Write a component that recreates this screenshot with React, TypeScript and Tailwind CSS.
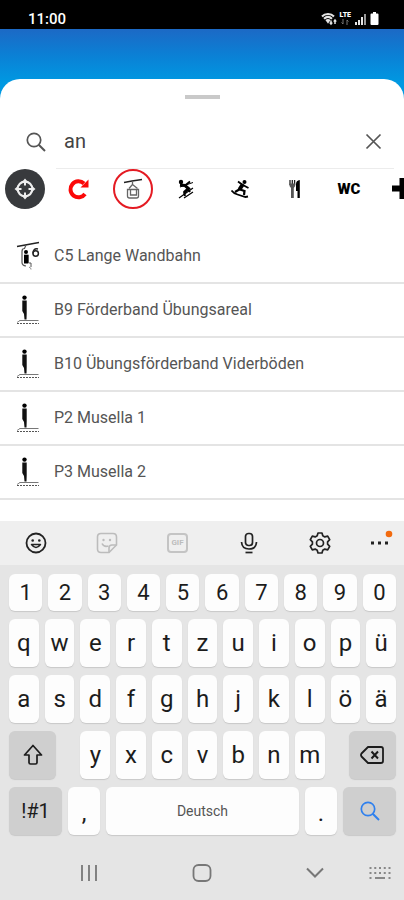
import React, { useState } from 'react';

type LiftKind = 'chair' | 'belt';

interface Lift {
  name: string;
  kind: LiftKind;
}

const LIFTS: Lift[] = [
  { name: 'C5 Lange Wandbahn', kind: 'chair' },
  { name: 'B9 Förderband Übungsareal', kind: 'belt' },
  { name: 'B10 Übungsförderband Viderböden', kind: 'belt' },
  { name: 'P2 Musella 1', kind: 'belt' },
  { name: 'P3 Musella 2', kind: 'belt' },
];

const DIGITS = '1234567890'.split('');
const TOP_ROW = 'qwertzuiopü'.split('');
const HOME_ROW = 'asdfghjklöä'.split('');
const BOTTOM_ROW = 'yxcvbnm'.split('');

const StatusBar: React.FC = () => (
  <div className="flex h-[29px] items-center justify-between bg-black pr-[25px] pl-7 pt-2 text-white">
    <span className="text-[15px] leading-5 font-medium">11:00</span>
    <div className="flex items-center gap-[3px]">
      <svg width="16" height="14" viewBox="0 0 16 14" fill="none" stroke="#e5e5e5">
        <path d="M1 4.5C4 1.2 10 1.2 13 4.5" strokeWidth="2" />
        <path d="M3 6.8C5.4 4.5 8.6 4.5 11 6.8" strokeWidth="2" />
        <path d="M4.4 8 7 11.8 9.6 8C8 6.8 6 6.8 4.4 8Z" fill="#e5e5e5" stroke="none" />
        <path d="M10 8.5v3M8.8 10.5 10 12l1.2-1.5M14 12V8.5M12.8 9.6 14 8l1.2 1.6" strokeWidth="1.5" />
      </svg>
      <div className="flex flex-col items-center">
        <span className="text-[7px] leading-[7px] font-black">LTE</span>
        <svg width="8" height="6" viewBox="0 0 8 6" fill="none" stroke="#777">
          <path d="M2 0v5M0.5 3.5 2 5M6 6V1M6 1l1.5 1.5" />
        </svg>
      </div>
      <svg width="13" height="12" viewBox="0 0 13 12" fill="#e5e5e5">
        <path d="M1 9h2v3H1zM4 7h2v5H4zM7 4h2v8H7z" />
        <path d="M10 1h2v11h-2z" fill="#999" />
      </svg>
      <svg width="9" height="13" viewBox="0 0 9 13" fill="white">
        <path d="M3 0h3v1.500h1.500q1 0 1 1V12q0 1-1 1h-6q-1 0-1-1V2.500q0-1 1-1H3z" />
      </svg>
    </div>
  </div>
);

const SearchGlyph: React.FC<{ className: string }> = ({ className }) => (
  <svg className={className} viewBox="0 0 20 20" fill="none" stroke="currentColor">
    <circle cx="8" cy="8" r="6.700" strokeWidth="1.700" />
    <path d="m12.700 12.700 6.300 6.300" strokeWidth="2" />
  </svg>
);

const LiftIcon: React.FC<{ kind: LiftKind }> = ({ kind }) =>
  kind === 'chair' ? (
    <svg width="24" height="30" viewBox="0 0 24 30" fill="none" stroke="#222">
      <path d="M1 5.500 23 1.500" strokeWidth="1.300" />
      <path d="M10 4 8.500 7.500q-2.500 0-2.500 3v11q0 3 4 3.500" stroke="#555" strokeWidth="1.200" />
      <circle cx="10" cy="11" r="2" fill="#000" stroke="none" />
      <path d="M8 14h4.500v8H15v4" stroke="#555" />
      <path d="M8 14h4v8.500H8z" fill="#000" stroke="none" />
      <path d="m13 26 2 1.500v1" stroke="#888" />
      <path d="M22 8C18.500 7 17 9.500 17 12.500" strokeWidth="1.500" />
      <circle cx="19.700" cy="12.500" r="2.700" strokeWidth="1.500" />
    </svg>
  ) : (
    <svg width="24" height="30" viewBox="0 0 24 30" fill="none">
      <circle cx="8.500" cy="2.600" r="2.200" fill="#000" />
      <path d="M6.300 5.500h4.400v13l-.2 6H8.500L8 19l-1.700-3z" fill="#111" />
      <path d="M3.500 25.500h19" stroke="#777" />
      <path d="M1 28.500h22" stroke="#555" strokeDasharray="2 1" />
      <path d="M1 27.500 4 25.500" stroke="#888" />
    </svg>
  );

const GondolaIcon = () => (
  <svg width="20" height="22" viewBox="0 0 20 22" fill="none" stroke="#666" strokeWidth="1.300">
    <path d="M1 4.500 9 3l10-1.500" stroke="#222" />
    <path d="M9.500 3v3.500L6 10.500M9.500 6.500l5 4" />
    <path d="M4.500 11.500h11v6.500q0 2-2 2h-7q-2 0-2-2z" />
    <path d="M7.500 11.500V17h6v-5.500" />
  </svg>
);

const SkierIcon = () => (
  <svg width="20" height="22" viewBox="0 0 20 22" fill="none" stroke="#000">
    <circle cx="4" cy="4" r="2.200" fill="#000" stroke="none" />
    <path d="m3 7 5 .500 3.500 3-4.500 4" strokeWidth="3" />
    <path d="m8 7.500 5-4" strokeWidth="1.800" />
    <path d="m3 9 13-4.500" strokeWidth="1" />
    <path d="m7 14 1 4M11 11l2 3" strokeWidth="2" />
    <path d="m2 20 14-10M7 20l9-6" strokeWidth="1.200" />
  </svg>
);

const SnowboarderIcon = () => (
  <svg width="20" height="22" viewBox="0 0 20 22" fill="none" stroke="#000">
    <circle cx="13.500" cy="4" r="2" fill="#000" stroke="none" />
    <path d="M7 3.500 11 6.500l6.500 3.500" strokeWidth="1.800" />
    <path d="m12 6-3.500 5.500" strokeWidth="4" />
    <path d="m9 11-5 3M9 11.500l4.500 1.500-.500 4" strokeWidth="2.200" />
    <path d="M.5 12.500q2 3 6 4l8 2.500 2.500-.5" strokeWidth="1.800" />
  </svg>
);

const ForkKnifeIcon = () => (
  <svg width="12" height="20" viewBox="0 0 12 20" fill="none">
    <path d="M1 1v5M3.300 1v5M5.600 1v5" stroke="#222" strokeWidth="1.300" />
    <path d="M.5 4.500h5.700V7L4.800 9v10H2V9L.5 7z" fill="#555" />
    <path d="M10.800 1v18H8.500v-7H7V5q0-3.500 3.800-4z" fill="#000" />
  </svg>
);

const FILTERS = [
  {
    label: 'Standort',
    shape: 'bg-[#383a3d]',
    icon: (
      <svg width="24" height="24" viewBox="0 0 24 24" fill="none">
        <circle cx="12" cy="12" r="7.300" stroke="#eee" strokeWidth="2.200" />
        <path d="m12 1.500 2.500 3h-5zM12 22.500l2.500-3h-5zM1.500 12l3-2.500v5zM22.500 12l-3-2.500v5z" fill="#eee" />
        <path d="M12 5v3.500M12 15.500V19M5 12h3.500M15.500 12H19" stroke="#eee" strokeWidth="2" />
      </svg>
    ),
  },
  {
    label: 'Zurücksetzen',
    shape: '',
    icon: (
      <svg width="22" height="22" viewBox="0 0 22 22" fill="none" stroke="#fb0808">
        <path d="M16 5.500A8 8 0 1 0 17 16" strokeWidth="4" />
        <path d="M20.500 1.500V9.500H12.500z" fill="#fb0808" stroke="none" />
      </svg>
    ),
  },
  { label: 'Lifte', shape: 'border-2 border-[#e41b23]', icon: <GondolaIcon /> },
  { label: 'Pisten', shape: '', icon: <SkierIcon /> },
  { label: 'Snowboard', shape: '', icon: <SnowboarderIcon /> },
  { label: 'Restaurants', shape: '', icon: <ForkKnifeIcon /> },
  { label: 'WC', shape: '', icon: <span className="text-[15px] font-black">WC</span> },
  {
    label: 'Erste Hilfe',
    shape: '',
    icon: (
      <svg width="22" height="22" viewBox="0 0 22 22">
        <path d="M7.500 0h7v7.500H22v6h-7.500V21h-7v-7.500H0v-6h7.500z" />
      </svg>
    ),
  },
];

const Key: React.FC<{ label: string; className?: string; children?: React.ReactNode }> = ({
  label,
  className = 'h-12 bg-[#fdfdfd] text-2xl',
  children,
}) => (
  <button
    type="button"
    aria-label={label}
    className={`flex items-center justify-center rounded-md shadow-[0_1px_1px_#c8c8c8] ${className}`}
  >
    {children ?? label}
  </button>
);

const KeyboardToolbar: React.FC = () => (
  <div className="grid h-11 grid-cols-[repeat(5,71fr)_49fr] place-items-center bg-[#efefef] text-[#222]">
    <button type="button" aria-label="Emoji">
      <svg width="22" height="22" viewBox="0 0 22 22" fill="none" stroke="currentColor" strokeWidth="1.800">
        <circle cx="11" cy="11" r="9.500" />
        <path d="M6.500 12.500q4.500 6 9 0z" strokeWidth="1.500" strokeLinejoin="round" />
        <circle cx="7.700" cy="8.500" r="1.300" fill="currentColor" stroke="none" />
        <circle cx="14.300" cy="8.500" r="1.300" fill="currentColor" stroke="none" />
      </svg>
    </button>
    <button type="button" aria-label="Sticker" className="text-[#bcbcbc]">
      <svg width="22" height="22" viewBox="0 0 22 22" fill="none" stroke="currentColor" strokeWidth="1.600">
        <path d="M5 1.500h12q3.500 0 3.500 3.500v8L13 20.500H5Q1.500 20.500 1.500 17V5Q1.500 1.500 5 1.500z" />
        <path d="M20.500 13H16q-3 0-3 3v4.500" />
        <path d="M6 11.500q2 4 6.500 2.500" />
        <circle cx="7.500" cy="8" r="1.200" fill="currentColor" stroke="none" />
        <circle cx="14" cy="8" r="1.200" fill="currentColor" stroke="none" />
      </svg>
    </button>
    <button
      type="button"
      className="flex h-5 w-[21px] items-center justify-center rounded-[4px] border-2 border-[#c4c4c4] text-[8px] font-bold text-[#bcbcbc]"
    >
      GIF
    </button>
    <button type="button" aria-label="Spracheingabe">
      <svg width="20" height="22" viewBox="0 0 20 22" fill="none" stroke="currentColor" strokeWidth="1.700">
        <rect x="6.500" y="1.500" width="7" height="12" rx="3" />
        <path d="M2.500 10q.5 7 7.500 7t7.500-7" />
        <path d="M6.500 20.500h7" />
      </svg>
    </button>
    <button type="button" aria-label="Einstellungen">
      <svg width="24" height="24" viewBox="0 0 24 24" fill="none" stroke="currentColor" strokeWidth="1.700">
        <path
          d="M10 2h4l.8 2.800 2 1.100 2.900-.7 2 3.500-2.100 2.100v2.400l2.100 2.100-2 3.500-2.900-.7-2 1.100L14 22h-4l-.8-2.800-2-1.100-2.900.7-2-3.500 2.100-2.100v-2.400L2.300 8.700l2-3.500 2.900.7 2-1.100z"
          strokeLinejoin="round"
        />
        <circle cx="12" cy="12" r="3.500" />
      </svg>
    </button>
    <button type="button" aria-label="Mehr">
      <svg width="26" height="26" viewBox="0 0 26 26" fill="currentColor">
        <path d="M4 11.500h3v3H4zM11 11.500h3v3h-3zM18 11.500h3v3h-3z" />
        <circle cx="22" cy="4" r="3.300" fill="#f26a0e" />
      </svg>
    </button>
  </div>
);

const NavBar: React.FC = () => (
  <nav className="mt-2 grid h-[57px] grid-cols-[113fr_113fr_113fr_32fr] place-items-center pt-[2px] pl-8 text-[#777]">
    <button type="button" aria-label="Letzte Apps">
      <svg width="18" height="18" viewBox="0 0 18 18" fill="none" stroke="currentColor" strokeWidth="1.800">
        <path d="M2 1v16M9 1v16M16 1v16" />
      </svg>
    </button>
    <button type="button" aria-label="Startseite">
      <svg width="20" height="18" viewBox="0 0 20 18" fill="none" stroke="currentColor" strokeWidth="1.800">
        <rect x="1.500" y="1" width="17" height="16" rx="5" />
      </svg>
    </button>
    <button type="button" aria-label="Tastatur ausblenden">
      <svg width="18" height="12" viewBox="0 0 18 12" fill="none" stroke="currentColor" strokeWidth="2">
        <path d="m1 1.500 8 8 8-8" />
      </svg>
    </button>
    <button type="button" aria-label="Tastatur wechseln" className="-ml-4">
      <svg width="24" height="14" viewBox="0 0 24 14" fill="none" stroke="#888" strokeWidth="1.800">
        <path d="M1.500 2h22M1.500 7h22" strokeDasharray="2 2.750" />
        <path d="M1.500 12h2M7 12h10M20.500 12h2" />
      </svg>
    </button>
  </nav>
);

const Keyboard: React.FC = () => (
  <div className="bg-[#e5e5e5] text-[#1c1c1c]">
    <KeyboardToolbar />
    <div className="flex flex-col gap-2 pt-[9px] pr-2 pl-[9px]">
      <div className="grid grid-cols-10 gap-[6px]">
        {DIGITS.map((d) => (
          <Key key={d} label={d} className="h-[37px] bg-[#fdfdfd] text-[22px]" />
        ))}
      </div>
      <div className="grid grid-cols-11 gap-[6px]">
        {TOP_ROW.map((c) => (
          <Key key={c} label={c} />
        ))}
      </div>
      <div className="grid grid-cols-11 gap-[6px]">
        {HOME_ROW.map((c) => (
          <Key key={c} label={c} />
        ))}
      </div>
      <div className="grid grid-cols-11 gap-[6px]">
        <Key label="Umschalt" className="col-span-2 h-12 w-[47px] bg-[#cfcfcf]">
          <svg width="20" height="22" viewBox="0 0 20 22" fill="none" stroke="currentColor" strokeWidth="1.700">
            <path d="M10 1.500 1.500 11H6v7.500q0 1.500 1.500 1.500h5q1.500 0 1.500-1.500V11h4.500z" strokeLinejoin="round" />
          </svg>
        </Key>
        {BOTTOM_ROW.map((c) => (
          <Key key={c} label={c} />
        ))}
        <Key label="Löschen" className="col-span-2 h-12 w-[47px] justify-self-end bg-[#cfcfcf]">
          <svg width="24" height="20" viewBox="0 0 24 20" fill="none" stroke="currentColor" strokeWidth="1.800">
            <path d="M8 2h13q2 0 2 2v12q0 2-2 2H8l-6.500-6.500q-1-1.500 0-3z" strokeLinejoin="round" />
            <path d="m11.500 6.500 6.500 7M18 6.500l-6.500 7" strokeWidth="2" />
          </svg>
        </Key>
      </div>
      <div className="flex gap-[6px]">
        <Key label="!#1" className="h-12 w-[53px] bg-[#cfcfcf] text-xl" />
        <Key label="," className="h-12 w-8 bg-[#fdfdfd] pt-1 text-2xl" />
        <Key label="Deutsch" className="h-12 flex-1 bg-[#fdfdfd] text-sm text-[#555]" />
        <Key label="." className="h-12 w-8 bg-[#fdfdfd] pt-1 text-2xl" />
        <Key label="Suchen" className="h-12 w-[53px] bg-[#cfcfcf] text-[#2f80ee]">
          <SearchGlyph className="size-5" />
        </Key>
      </div>
    </div>
    <NavBar />
  </div>
);

const App: React.FC = () => {
  const [query, setQuery] = useState('an');

  return (
    <div className="flex min-h-screen flex-col bg-white font-[Roboto,sans-serif]">
      <StatusBar />

      <div className="flex flex-1 flex-col bg-[linear-gradient(#1c69c5_0px,#0b80d5_26px,#0099e2_54px)] pt-[50px]">
        <main className="flex flex-1 flex-col rounded-t-[20px] bg-white pt-4">
          <div className="mx-auto h-1 w-[35px] bg-[#c9c9c9]" />

          {/* Search field */}
          <div className="mt-[15px] flex h-[55px] items-center pr-[10px] pl-[26px]">
            <label htmlFor="search" aria-label="Suche" className="w-[30px] text-[#555]">
              <SearchGlyph className="size-5" />
            </label>
            <div className="flex h-full flex-1 items-center border-b border-[#ececec] pr-3 pl-2">
              <input
                id="search"
                type="text"
                value={query}
                onChange={(e) => setQuery(e.target.value)}
                className="min-w-0 flex-1 text-xl text-[#444] outline-none"
              />
              <button type="button" aria-label="Eingabe löschen" onClick={() => setQuery('')}>
                <svg width="17" height="17" viewBox="0 0 17 17" stroke="#555" strokeWidth="1.700">
                  <path d="m1.500 1.500 14 14M15.500 1.500l-14 14" />
                </svg>
              </button>
            </div>
          </div>

          {/* Category filters, scrolls sideways */}
          <div className="flex gap-[14px] overflow-hidden pl-[5px]">
            {FILTERS.map((f) => (
              <button
                key={f.label}
                type="button"
                aria-label={f.label}
                className={`flex size-10 shrink-0 items-center justify-center rounded-full ${f.shape}`}
              >
                {f.icon}
              </button>
            ))}
          </div>

          <ul className="mt-[21px] pb-5">
            {LIFTS.map((lift) => (
              <li key={lift.name} className="border-b-2 border-[#e4e4e4]">
                <button type="button" className="flex h-[52px] w-full items-center gap-[14px] pl-4 text-left">
                  <LiftIcon kind={lift.kind} />
                  <span className="text-base text-[#555]">{lift.name}</span>
                </button>
              </li>
            ))}
          </ul>
        </main>
      </div>

      <Keyboard />
    </div>
  );
};

export default App;
